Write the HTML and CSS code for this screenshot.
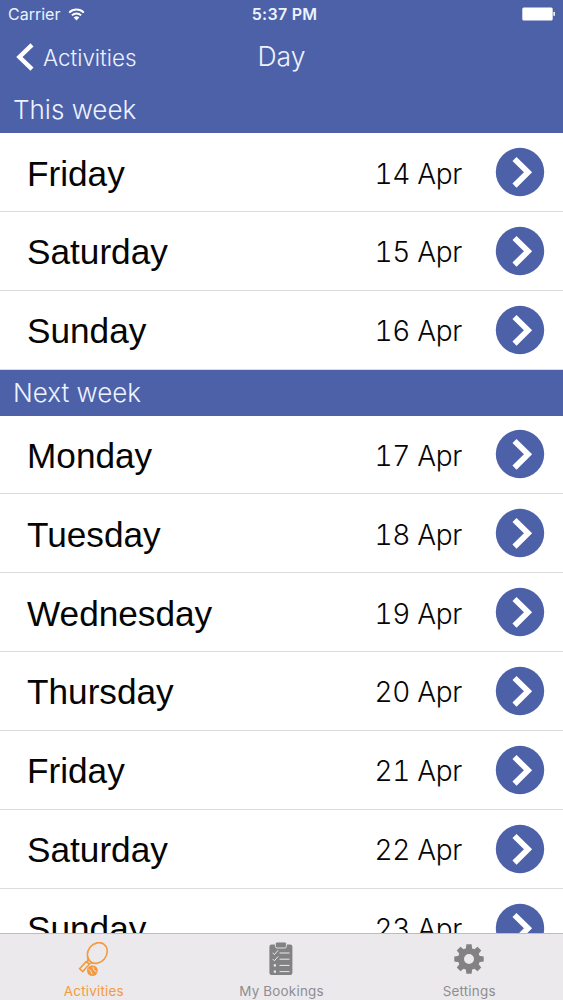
FILE: index.html
```html
<!DOCTYPE html>
<html lang="en">
<head>
    <meta charset="UTF-8">
    <meta name="viewport" content="width=device-width, initial-scale=1.0">
    <title>Day</title>
    <link rel="stylesheet" href="styles.css">
</head>
<body>
    <!-- Shared row icon -->
    <svg class="defs" width="0" height="0">
        <defs>
            <symbol id="go" viewBox="0 0 50 50">
                <circle cx="25" cy="25" r="24.2" fill="#4c61a8" />
                <path d="M19.5 12 L33 25.3 L19.5 38.6" fill="none" stroke="#fff" stroke-width="5.8" />
            </symbol>
        </defs>
    </svg>

    <div class="screen">
        <header class="header">
            <div class="status-bar">
                <div class="carrier">
                    <span>Carrier</span>
                    <svg class="wifi" width="17" height="13" viewBox="0 0 17 13">
                        <path d="M1.2 4.6 A10.4 10.4 0 0 1 15.8 4.6" />
                        <path d="M3.9 7.4 A6.6 6.6 0 0 1 13.1 7.4" />
                        <path class="wifi-dot" d="M8.5 12.4 L5.7 9.5 A4 4 0 0 1 11.3 9.5 Z" />
                    </svg>
                </div>
                <span class="time">5:37 PM</span>
                <svg class="battery" width="33" height="14" viewBox="0 0 33 14">
                    <rect x="0.3" y="0.5" width="30.4" height="13" rx="1.6" />
                    <rect x="31.4" y="4.8" width="1.5" height="4.2" rx="0.7" />
                </svg>
            </div>
            <nav class="nav-bar">
                <a class="back">
                    <svg width="18" height="28" viewBox="0 0 18 28">
                        <path d="M16 1.8 L3.4 14 L16 26.2" fill="none" stroke="#fff" stroke-width="4.4" />
                    </svg>
                    <span>Activities</span>
                </a>
                <h1 class="title">Day</h1>
            </nav>
        </header>

        <main class="list">
            <h2 class="section">This week</h2>
            <div class="row"><span class="day">Friday</span><span class="date">14 Apr</span><svg class="go"><use href="#go" /></svg></div>
            <div class="row"><span class="day">Saturday</span><span class="date">15 Apr</span><svg class="go"><use href="#go" /></svg></div>
            <div class="row"><span class="day">Sunday</span><span class="date">16 Apr</span><svg class="go"><use href="#go" /></svg></div>

            <h2 class="section">Next week</h2>
            <div class="row"><span class="day">Monday</span><span class="date">17 Apr</span><svg class="go"><use href="#go" /></svg></div>
            <div class="row"><span class="day">Tuesday</span><span class="date">18 Apr</span><svg class="go"><use href="#go" /></svg></div>
            <div class="row"><span class="day">Wednesday</span><span class="date">19 Apr</span><svg class="go"><use href="#go" /></svg></div>
            <div class="row"><span class="day">Thursday</span><span class="date">20 Apr</span><svg class="go"><use href="#go" /></svg></div>
            <div class="row"><span class="day">Friday</span><span class="date">21 Apr</span><svg class="go"><use href="#go" /></svg></div>
            <div class="row"><span class="day">Saturday</span><span class="date">22 Apr</span><svg class="go"><use href="#go" /></svg></div>
            <div class="row"><span class="day">Sunday</span><span class="date">23 Apr</span><svg class="go"><use href="#go" /></svg></div>
        </main>

        <footer class="tab-bar">
            <a class="tab active">
                <svg width="36" height="36" viewBox="0 0 36 36" fill="none" stroke="#f3993f">
                    <ellipse cx="21.3" cy="11" rx="9.2" ry="11" transform="rotate(38 21.3 11)" stroke-width="1.6" />
                    <path d="M11.6 14.6 L11.8 20.6 M17.4 20.8 L12.6 21.6" stroke-width="1.4" />
                    <path d="M10.2 19.6 L13.3 22.2 L6.8 29.6 L3.6 26.8 Z" stroke-width="1.6" />
                    <circle cx="16.4" cy="28.6" r="5.4" fill="#f3993f" stroke="none" />
                    <path d="M12.4 27.2 Q15.2 27.6 16 32.4 M16.8 24.8 Q17.4 29.2 20.6 30" stroke="#ebe9eb" stroke-width="0.9" />
                </svg>
                <span>Activities</span>
            </a>
            <a class="tab">
                <svg width="36" height="36" viewBox="0 0 36 36">
                    <rect x="6.4" y="2.6" width="23" height="30.4" rx="2.2" fill="#828184" />
                    <rect x="12.4" y="0" width="11" height="6" rx="1.6" fill="#828184" stroke="#ebe9eb" stroke-width="0.9" />
                    <g fill="none" stroke="#ebe9eb" stroke-width="1">
                        <path d="M9.7 10.8 L11.4 12.6 L15.2 8.2 M16.5 11 H26.5" />
                        <path d="M9.7 17 L11.4 18.8 L15.2 14.4 M16.5 17.2 H26.5" />
                        <path d="M16.5 23.4 H26.5 M16.5 29.6 H26.5" />
                    </g>
                    <path d="M10.8 22.3 h2.2 v2.2 h-2.2 Z M10.8 28.5 h2.2 v2.2 h-2.2 Z" fill="#ebe9eb" />
                </svg>
                <span>My Bookings</span>
            </a>
            <a class="tab">
                <svg width="36" height="36" viewBox="-18 -17 36 36" fill="#828184">
                    <g id="teeth">
                        <path d="M-3.4 -8 L-2.6 -14.7 H2.6 L3.4 -8 Z M-3.4 8 L-2.6 14.7 H2.6 L3.4 8 Z" />
                        <path d="M-8 -3.4 L-14.7 -2.6 V2.6 L-8 3.4 Z M8 -3.4 L14.7 -2.6 V2.6 L8 3.4 Z" />
                    </g>
                    <use href="#teeth" transform="rotate(45)" />
                    <circle r="8" fill="none" stroke="#828184" stroke-width="6" />
                </svg>
                <span>Settings</span>
            </a>
        </footer>
    </div>
</body>
</html>
```

FILE: styles.css
```css
* {
    box-sizing: border-box;
}
body {
    margin: 0;
    font-family: "Liberation Sans", Arial, sans-serif;
    background-color: #fff;
}
.defs {
    display: none;
}
.screen {
    display: flex;
    flex-direction: column;
    width: 563px;
    height: 1000px;
    overflow: hidden;
}
.header {
    flex: none;
    height: 87.4px;
    background-color: #4c61a8;
    color: #edf2ff;
}
.status-bar {
    display: grid;
    grid-template-columns: 1fr auto 1fr;
    align-items: center;
    height: 28px;
    padding: 0 8px;
    font-family: Inter, sans-serif;
    font-size: 16px;
}
.carrier {
    display: flex;
    align-items: center;
    gap: 8px;
}
.wifi {
    fill: none;
    stroke: #fff;
    stroke-width: 2;
}
.wifi .wifi-dot {
    fill: #fff;
    stroke: none;
}
.time {
    font-weight: 600;
    letter-spacing: 0.25px;
    padding-left: 6px;
}
.battery {
    justify-self: end;
    fill: #fff;
}
.nav-bar {
    display: grid;
    grid-template-columns: 1fr auto 1fr;
    align-items: center;
    height: 58px;
    padding: 0 16px;
}
.back {
    display: flex;
    align-items: center;
    gap: 9px;
    font-family: Inter, sans-serif;
    font-size: 22.4px;
    font-weight: 300;
}
.title {
    margin: 0;
    padding-bottom: 2px;
    font-family: Inter, sans-serif;
    font-size: 26.6px;
    font-weight: 300;
}
.list {
    flex: 1;
    min-height: 0;
    overflow: hidden;
    background-color: #fff;
}
.section {
    height: 45.8px;
    margin: 0;
    padding-left: 13px;
    background-color: #4c61a8;
    color: #edf2ff;
    font-family: Inter, sans-serif;
    font-size: 26px;
    font-weight: 300;
    line-height: 46.6px;
}
.row {
    display: flex;
    align-items: center;
    height: 78.85px;
    padding: 0 18px 0 27px;
    border-bottom: 1px solid #dcdcde;
    color: #050505;
}
.day {
    flex: 1;
    font-size: 35.2px;
    line-height: 40px;
    padding-top: 3px;
}
.date {
    font-family: Inter, sans-serif;
    font-size: 28px;
    font-weight: 300;
    font-variant-numeric: tabular-nums;
    letter-spacing: -0.35px;
    padding-top: 3px;
}
.go {
    width: 50px;
    height: 50px;
    margin-left: 33px;
}
.tab-bar {
    flex: none;
    display: grid;
    grid-template-columns: repeat(3, 1fr);
    height: 67px;
    border-top: 1px solid #bdbcbf;
    background-color: #ebe9eb;
}
.tab {
    display: flex;
    flex-direction: column;
    align-items: center;
    padding-top: 8px;
    color: #8e8d91;
    font-family: Inter, sans-serif;
    font-size: 13.4px;
    letter-spacing: 0.22px;
}
.tab span {
    margin-top: 5px;
    line-height: 17px;
}
.tab.active {
    color: #f3993f;
}
```
